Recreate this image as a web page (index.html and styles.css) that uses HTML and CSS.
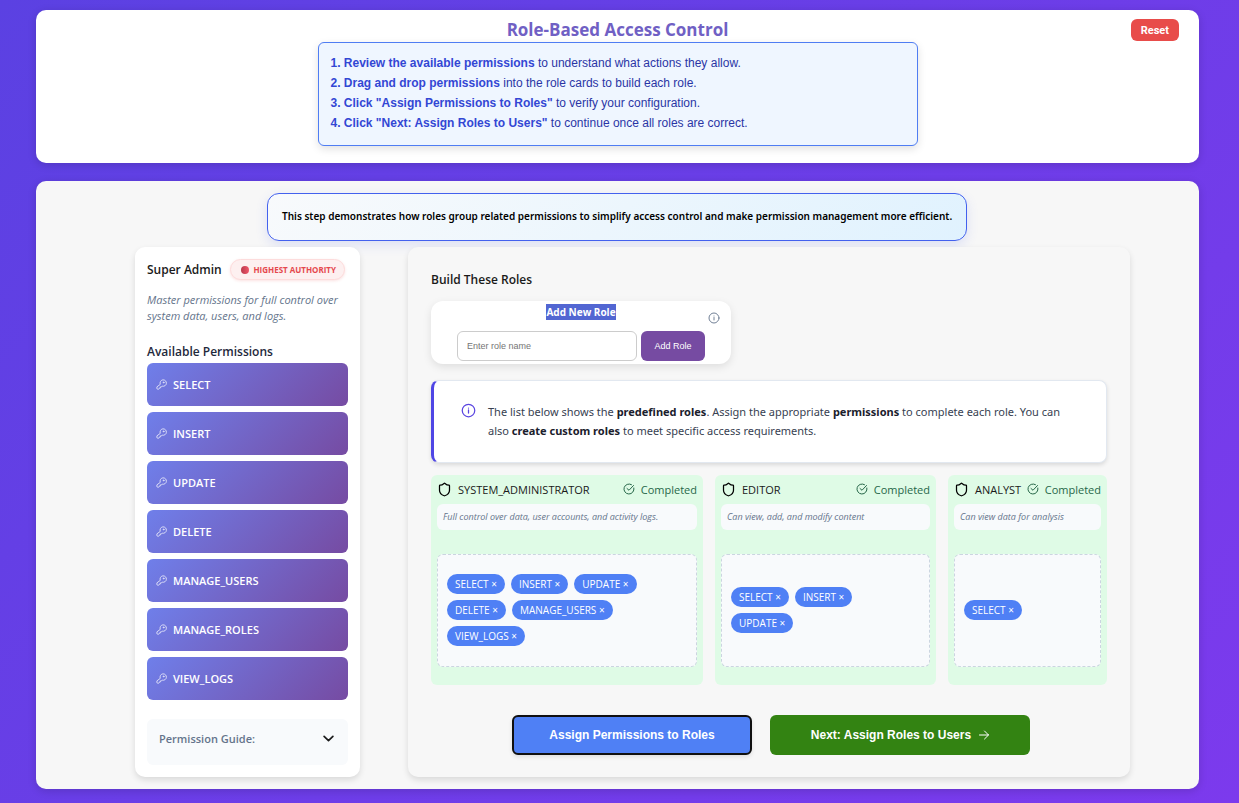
FILE: index.html
```html
<!DOCTYPE html>
<html lang="en">
<head>
<meta charset="utf-8">
<title>Role-Based Access Control</title>
<link rel="stylesheet" href="styles.css">
</head>
<body>
<svg class="sprite" aria-hidden="true">
  <symbol id="key" viewBox="0 0 24 24"><path d="M2 18v3a1 1 0 0 0 1 1h3.500l1.500-1.500V19h2v-2h2l1.500-1.500a7 7 0 1 0-4.500-4.500z"/><circle cx="16.500" cy="7.500" r="1"/></symbol>
  <symbol id="info" viewBox="0 0 24 24"><circle cx="12" cy="12" r="10"/><path d="M12 16v-5M12 8h.01"/></symbol>
  <symbol id="shield" viewBox="0 0 24 24"><path d="M20 13c0 5-3.500 7.500-7.700 9a1 1 0 0 1-.7 0C7.500 20.500 4 18 4 13V6a1 1 0 0 1 1-1c2 0 4.500-1.200 6.200-2.700a1.200 1.200 0 0 1 1.600 0C14.500 3.800 17 5 19 5a1 1 0 0 1 1 1z"/></symbol>
  <symbol id="check" viewBox="0 0 24 24"><path d="M21.800 10A10 10 0 1 1 17 3.300M8 11l4 3.500L21 5"/></symbol>
</svg>
<header class="top">
  <div class="top-main">
    <h1>Role-Based Access Control</h1>
    <div class="steps">
      <p><strong>1. Review the available permissions</strong> to understand what actions they allow.</p>
      <p><strong>2. Drag and drop permissions</strong> into the role cards to build each role.</p>
      <p><strong>3. Click "Assign Permissions to Roles"</strong> to verify your configuration.</p>
      <p><strong>4. Click "Next: Assign Roles to Users"</strong> to continue once all roles are correct.</p>
    </div>
  </div>
  <button class="reset" type="button">Reset</button>
</header>
<main class="board">
  <p class="intro">This step demonstrates how roles group related permissions to simplify access control and make permission management more efficient.</p>
  <div class="columns">
    <aside class="admin">
      <div class="admin-head">
        <h2>Super Admin</h2>
        <span class="authority"><span class="dot"></span>HIGHEST AUTHORITY</span>
      </div>
      <p class="admin-text">Master permissions for full control over system data, users, and logs.</p>
      <h2 class="available">Available Permissions</h2>
      <ul class="perms">
        <li><svg class="icon"><use href="#key"/></svg>SELECT</li>
        <li><svg class="icon"><use href="#key"/></svg>INSERT</li>
        <li><svg class="icon"><use href="#key"/></svg>UPDATE</li>
        <li><svg class="icon"><use href="#key"/></svg>DELETE</li>
        <li><svg class="icon"><use href="#key"/></svg>MANAGE_USERS</li>
        <li><svg class="icon"><use href="#key"/></svg>MANAGE_ROLES</li>
        <li><svg class="icon"><use href="#key"/></svg>VIEW_LOGS</li>
      </ul>
      <button class="guide" type="button">Permission Guide:
        <svg class="chevron" viewBox="0 0 10 6"><path d="M1 1l4 4 4-4"/></svg>
      </button>
    </aside>
    <section class="builder">
      <h2>Build These Roles</h2>
      <form class="add">
        <label for="role-name"><span>Add New Role</span></label>
        <svg class="icon add-info"><use href="#info"/></svg>
        <div class="add-row">
          <input id="role-name" type="text" placeholder="Enter role name">
          <button type="button">Add Role</button>
        </div>
      </form>
      <div class="note">
        <svg class="icon note-icon"><use href="#info"/></svg>
        <p>The list below shows the <strong>predefined roles</strong>. Assign the appropriate <strong>permissions</strong> to complete each role. You can also <strong>create custom roles</strong> to meet specific access requirements.</p>
      </div>
      <div class="roles">
        <article class="role">
          <div class="role-head"><svg class="icon shield"><use href="#shield"/></svg><h3>SYSTEM_ADMINISTRATOR</h3><span class="done"><svg class="icon check"><use href="#check"/></svg>Completed</span></div>
          <p class="role-text">Full control over data, user accounts, and activity logs.</p>
          <div class="drop">
            <button type="button">SELECT <span>×</span></button>
            <button type="button">INSERT <span>×</span></button>
            <button type="button">UPDATE <span>×</span></button>
            <button type="button">DELETE <span>×</span></button>
            <button type="button">MANAGE_USERS <span>×</span></button>
            <button type="button">VIEW_LOGS <span>×</span></button>
          </div>
        </article>
        <article class="role">
          <div class="role-head"><svg class="icon shield"><use href="#shield"/></svg><h3>EDITOR</h3><span class="done"><svg class="icon check"><use href="#check"/></svg>Completed</span></div>
          <p class="role-text">Can view, add, and modify content</p>
          <div class="drop">
            <button type="button">SELECT <span>×</span></button>
            <button type="button">INSERT <span>×</span></button>
            <button type="button">UPDATE <span>×</span></button>
          </div>
        </article>
        <article class="role">
          <div class="role-head"><svg class="icon shield"><use href="#shield"/></svg><h3>ANALYST</h3><span class="done"><svg class="icon check"><use href="#check"/></svg>Completed</span></div>
          <p class="role-text">Can view data for analysis</p>
          <div class="drop">
            <button type="button">SELECT <span>×</span></button>
          </div>
        </article>
      </div>
      <div class="actions">
        <button class="assign" type="button">Assign Permissions to Roles</button>
        <button class="next" type="button">Next: Assign Roles to Users
          <svg class="arrow" viewBox="0 0 10 10"><path d="M0.500 5h9M5.500 1l4 4-4 4"/></svg>
        </button>
      </div>
    </section>
  </div>
</main>
</body>
</html>
```

FILE: styles.css
```css
* { box-sizing: border-box; }

html { min-height: 100%; background: linear-gradient(135deg, #5b41e2, #7c3aed); }

body {
  margin: 0;
  padding: 10px 40px 14px 36px;
  display: flex;
  flex-direction: column;
  gap: 18px;
  font-family: "Open Sans", "Noto Sans", sans-serif;
  font-size: 12px;
  color: #1a1a1a;
}

h1, h2, h3, p, ul { margin: 0; padding: 0; }
button { font: inherit; border: 0; }
.sprite { display: none; }

.icon, .chevron, .arrow {
  flex: none;
  fill: none;
  stroke: currentColor;
  stroke-width: 2;
  stroke-linecap: round;
  stroke-linejoin: round;
}

.top {
  display: grid;
  grid-template-columns: 1fr minmax(0, 600px) 1fr;
  align-items: start;
  padding: 8px 20px 17px;
  background: #fff;
  border-radius: 10px;
  box-shadow: 0 2px 8px rgba(0, 0, 0, .15);
}
.top-main { grid-column: 2; }
h1 {
  font-size: 17px;
  line-height: 24px;
  font-weight: 700;
  text-align: center;
  color: #7060c4;
}
.steps {
  padding: 10px 12px 12px;
  border: 1px solid #4f7df3;
  border-radius: 6px;
  background: #eff6ff;
  box-shadow: 0 3px 8px rgba(0, 0, 0, .12);
  color: #2a35a5;
  font-family: "Liberation Sans", Arial, sans-serif;
  line-height: 20px;
}
.steps strong { color: #3347d4; }
.reset {
  justify-self: end;
  margin-top: 1px;
  padding: 0 10px;
  height: 22px;
  border-radius: 6px;
  background: #e84c4a;
  color: #fff;
  font: bold 11px Roboto, "Liberation Sans", sans-serif;
}

.board {
  padding: 12px 69px 12px 99px;
  background: #f7f7f7;
  border-radius: 10px;
  box-shadow: 0 2px 8px rgba(0, 0, 0, .15);
}
.intro {
  width: fit-content;
  margin: 0 0 6px 132px;
  padding: 13px 14px 15px;
  border: 1px solid #4361ee;
  border-radius: 12px;
  background: linear-gradient(135deg, #f8fafc, #e0f2fe);
  box-shadow: 0 4px 12px rgba(67, 97, 238, .15);
  font-family: "Noto Sans", "Open Sans", sans-serif;
  font-size: 10px;
  line-height: 18px;
  font-weight: 600;
  color: #000;
}
.columns { display: grid; grid-template-columns: 225px 1fr; gap: 48px; }

.admin, .builder {
  position: relative;
  border-radius: 10px;
  box-shadow: 0 3px 6px rgba(0, 0, 0, .12);
}
.admin { padding: 12px; background: #fff; }
.builder { padding: 24px 23px 22px; background: #f7f7f7; }
h2 { font-size: 12px; line-height: 18px; font-weight: 600; }
.admin-head { display: flex; align-items: center; gap: 6px; white-space: nowrap; }
.authority {
  display: flex;
  align-items: center;
  gap: 4px;
  height: 21px;
  margin-left: auto;
  margin-right: 3px;
  padding: 0 8px 0 10px;
  border: 1px solid #fddcdc;
  border-radius: 12px;
  background: #fdf0f0;
  box-shadow: 0 1px 3px rgba(229, 62, 62, .15);
  color: #e5484d;
  font-size: 8px;
  font-weight: 700;
}
.dot { width: 8px; height: 8px; border-radius: 4px; background: linear-gradient(90deg, #b83a4c, #f0566a); }
.admin-text {
  margin: 12px 0 19px;
  font-size: 11px;
  line-height: 16px;
  font-style: italic;
  color: #64748b;
}
.available { margin-bottom: 2px; color: #1e293b; }
.perms { display: grid; gap: 6px; list-style: none; }
.perms li {
  display: flex;
  align-items: center;
  gap: 6px;
  height: 43px;
  padding: 0 9px;
  border-radius: 6px;
  background: linear-gradient(135deg, #6f7fea, #764ba2);
  color: #fff;
  font-size: 11px;
  font-weight: 600;
}
.perms .icon { width: 11px; height: 11px; opacity: .8; }
.guide {
  display: flex;
  justify-content: space-between;
  align-items: center;
  width: 100%;
  height: 46px;
  margin-top: 19px;
  padding: 0 14px 8px 12px;
  border-radius: 6px;
  background: #f8fafc;
  color: #64748b;
  font-size: 11px;
  font-weight: 600;
}
.chevron { width: 11px; height: 7px; color: #1a1a1a; stroke-width: 1.5; }

.add {
  position: relative;
  display: flex;
  flex-direction: column;
  align-items: center;
  width: 300px;
  margin: 12px 0 16px;
  padding: 3px 0;
  border-radius: 12px;
  background: #fff;
  box-shadow: 0 3px 8px rgba(0, 0, 0, .1);
}
.add label { margin-bottom: 11px; font-size: 10px; line-height: 16px; font-weight: 700; color: #fff; }
.add label span { display: block; background: #5266d2; }
.add-info { position: absolute; top: 11px; right: 11px; width: 12px; height: 12px; color: #718096; }
.add-row { display: flex; gap: 4px; }
.add input {
  width: 180px;
  height: 30px;
  padding: 0 9px;
  border: 1px solid #ccc;
  border-radius: 6px;
  font: 9px "Liberation Sans", Arial, sans-serif;
}
.add input::placeholder { color: #757575; opacity: 1; }
.add button {
  width: 64px;
  border-radius: 6px;
  background: #764ba2;
  color: #fff;
  font: 9px "Liberation Sans", Arial, sans-serif;
}

.note {
  display: flex;
  gap: 12px;
  margin-bottom: 12px;
  padding: 21px 30px 21px 27px;
  border: 1px solid #e2e8f0;
  border-left: 3px solid #4f46e5;
  border-radius: 8px;
  background: #fff;
  box-shadow: 0 2px 4px rgba(0, 0, 0, .12);
  color: #374151;
  font-family: "Noto Sans", "Open Sans", sans-serif;
  font-size: 11px;
  line-height: 19px;
}
.note p { padding-bottom: 1px; }
.note strong { font-weight: 700; color: #1a202c; }
.note-icon { width: 15px; height: 15px; margin-top: 1px; color: #5a45e0; }

.roles { display: grid; grid-template-columns: 272fr 221fr 159fr; gap: 12px; }
.role { min-width: 0; padding: 4px 6px 18px; border-radius: 6px; background: #dffbe6; }
.role-head { display: flex; align-items: center; height: 20px; margin-bottom: 5px; white-space: nowrap; }
.shield { width: 15px; height: 15px; color: #000; }
h3 { margin-left: 6px; font-size: 11px; font-weight: 400; }
.done { display: flex; align-items: center; gap: 6px; margin-left: auto; font-size: 11px; color: #276749; }
.check { width: 12px; height: 12px; }
.role-text {
  height: 26px;
  margin-bottom: 24px;
  padding: 0 6px;
  border-radius: 6px;
  background: #f8fafc;
  color: #64748b;
  font-size: 9px;
  line-height: 26px;
  font-style: italic;
  white-space: nowrap;
}
.drop {
  display: flex;
  flex-wrap: wrap;
  align-content: center;
  gap: 6px;
  height: 113px;
  padding: 0 9px 2px;
  border: 1px dashed #cbd5e0;
  border-radius: 6px;
  background: #f8fafc;
}
.drop button {
  height: 20px;
  padding: 0 8px;
  border-radius: 10px;
  background: #4f80f5;
  color: #fff;
  font-size: 10px;
  line-height: 20px;
  font-weight: 500;
}

.actions { display: flex; justify-content: center; gap: 18px; margin: 30px 0 0 4px; }
.actions button {
  height: 40px;
  border-radius: 6px;
  color: #fff;
  font: bold 12px "Liberation Sans", Arial, sans-serif;
}
.actions .assign { width: 240px; background: #4f80f5; border: 2px solid #101010; box-shadow: 0 2px 4px rgba(0, 0, 0, .1); }
.next { display: flex; justify-content: center; align-items: center; gap: 8px; width: 260px; background: #338312; }
.arrow { width: 10px; height: 10px; stroke-width: 1; }
```
